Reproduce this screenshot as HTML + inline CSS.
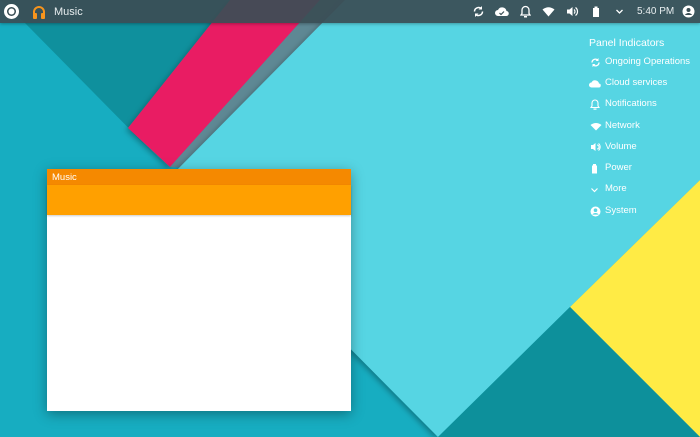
<!DOCTYPE html>
<html><head><meta charset="utf-8"><style>
*{margin:0;padding:0;box-sizing:border-box}
body{width:700px;height:437px;overflow:hidden;position:relative;font-family:"Liberation Sans","DejaVu Sans",sans-serif;background:#17adc1}
svg.bg{position:absolute;left:0;top:0}
.bar{position:absolute;left:0;top:0;width:700px;height:23px;background:rgba(58,78,85,0.93);color:#eef;box-shadow:0 1px 3px rgba(0,0,0,.3)}
.bar .t{position:absolute;top:6px;font-size:11px;color:#e8eef0}
.win{position:absolute;left:47px;top:169px;width:304px;height:242px;background:#fff;box-shadow:0 3px 12px rgba(0,0,0,.35)}
.win .tb{height:16px;background:#f58900;color:#fff;font-size:9.5px;padding:3px 0 0 5px}
.win .hd{height:30px;background:#ffa000;box-shadow:0 1px 2px rgba(0,0,0,.2)}
.panel{position:absolute;left:589px;top:37px;color:#fff;font-size:9.5px}
.panel .h{font-size:10.5px;margin-bottom:6px}
.it{position:absolute;left:16px;white-space:nowrap}
.ic{position:absolute;left:1px}
</style></head><body>
<svg class="bg" width="700" height="437">
<defs><filter id="s" x="-20%" y="-20%" width="140%" height="140%"><feDropShadow dx="-2" dy="2" stdDeviation="3" flood-opacity="0.3"/></filter></defs>
<polygon points="25,23 240,23 128,128 168,168" fill="#0f909d"/>
<polygon points="0,0 240,0 240,23 25,23" fill="#0f909d"/>
<polygon points="230,0 320,0 170,167 128,128" fill="#e91e63" filter="url(#s)"/>
<polygon points="320,0 345,0 185,168 170,167" fill="#5e8894"/>
<polygon points="345,0 700,0 700,180 570,307 438,437 175,172" fill="#57d5e3" filter="url(#s)"/>
<polygon points="700,180 700,437 570,307" fill="#ffeb45"/>
<polygon points="438,437 570,307 700,437" fill="#0d909b"/>
</svg>
<div class="bar">
<svg style="position:absolute;left:3px;top:3px" width="17" height="17"><circle cx="8.5" cy="8.5" r="7.5" fill="#fff"/><circle cx="8.5" cy="8.5" r="4.5" fill="#3a4e55"/><circle cx="8.5" cy="8.5" r="3" fill="#fff"/></svg>
<svg style="position:absolute;left:31px;top:4px" width="16" height="16"><path d="M3 10V8a5 5 0 0 1 10 0v2" fill="none" stroke="#f7941d" stroke-width="2"/><rect x="2" y="9" width="4" height="6" rx="1" fill="#f7941d"/><rect x="10" y="9" width="4" height="6" rx="1" fill="#f7941d"/></svg>
<div class="t" style="left:54px">Music</div>
<svg style="position:absolute;left:472px;top:5px" width="13" height="13"><path d="M2.5 6.5a4 4 0 0 1 7-2.6M10.5 6.5a4 4 0 0 1-7 2.6" fill="none" stroke="#fff" stroke-width="1.5"/><path d="M10 1v3.5H6.5z M3 12V8.5h3.5z" fill="#fff"/></svg>
<svg style="position:absolute;left:495px;top:6px" width="14" height="11"><path d="M3 10a3 3 0 0 1 0-6 4.5 4.5 0 0 1 8.5 1A2.5 2.5 0 0 1 11 10z" fill="#fff"/><path d="M4.5 7l1.5 1.5 3-3" stroke="#3a4e55" stroke-width="1.2" fill="none"/></svg>
<svg style="position:absolute;left:520px;top:5px" width="11" height="13"><path d="M5.5 1.5a3.5 3.5 0 0 0-3.5 3.5v3.5L1 10h9l-1-1.5V5a3.5 3.5 0 0 0-3.5-3.5z" fill="none" stroke="#fff" stroke-width="1.3"/><rect x="4" y="11" width="3" height="1.5" fill="#fff"/></svg>
<svg style="position:absolute;left:542px;top:7px" width="13" height="10"><path d="M0.5 2.5Q6.5-2 12.5 2.5L6.5 9.5z" fill="#fff"/></svg>
<svg style="position:absolute;left:566px;top:6px" width="13" height="11"><path d="M1 3.5h2.5L6.5 1v9L3.5 7.5H1z" fill="#fff"/><path d="M8 3.5a2.5 2.5 0 0 1 0 4M9.5 1.5a5 5 0 0 1 0 8" fill="none" stroke="#fff" stroke-width="1.2"/></svg>
<svg style="position:absolute;left:592px;top:6px" width="8" height="12"><rect x="2.5" y="0.5" width="3" height="2" fill="#fff"/><rect x="1" y="2" width="6" height="9" fill="#fff"/></svg>
<svg style="position:absolute;left:615px;top:8px" width="9" height="7"><path d="M1.5 2l3 3 3-3" stroke="#fff" stroke-width="1.3" fill="none"/></svg>
<div class="t" style="left:637px;font-size:10px;top:6px">5:40 PM</div>
<svg style="position:absolute;left:682px;top:5px" width="13" height="13"><circle cx="6.5" cy="6.5" r="6" fill="#fff"/><circle cx="6.5" cy="5" r="2" fill="#3a4e55"/><path d="M2.8 10a4.5 4.5 0 0 1 7.4 0" fill="#3a4e55"/></svg>
</div>
<div class="win"><div class="tb">Music</div><div class="hd"></div></div>
<div class="panel">
<div class="h">Panel Indicators</div>
<div class="it" style="top:19px">Ongoing Operations</div>
<div class="it" style="top:40px">Cloud services</div>
<div class="it" style="top:61px">Notifications</div>
<div class="it" style="top:83px">Network</div>
<div class="it" style="top:104px">Volume</div>
<div class="it" style="top:125px">Power</div>
<div class="it" style="top:146px">More</div>
<div class="it" style="top:168px">System</div>
<svg class="ic" style="top:20px" width="11" height="11"><path d="M2 5.5a3.5 3.5 0 0 1 6-2.3M9 5.5a3.5 3.5 0 0 1-6 2.3" fill="none" stroke="#fff" stroke-width="1.3"/><path d="M8.5 1v3H5.5z M2.5 10V7h3z" fill="#fff"/></svg>
<svg class="ic" style="top:42px;left:0" width="12" height="9"><path d="M2.5 8.5a2.5 2.5 0 0 1 0-5 4 4 0 0 1 7.5 1A2 2 0 0 1 9.5 8.5z" fill="#fff"/></svg>
<svg class="ic" style="top:62px" width="10" height="11"><path d="M5 1a3 3 0 0 0-3 3v3L1 8.5h8L8 7V4a3 3 0 0 0-3-3z" fill="none" stroke="#fff" stroke-width="1.1"/><rect x="3.5" y="9.5" width="3" height="1.2" fill="#fff"/></svg>
<svg class="ic" style="top:86px" width="12" height="8"><path d="M0.5 2Q6-2 11.5 2L6 7.5z" fill="#fff"/></svg>
<svg class="ic" style="top:105px" width="12" height="10"><path d="M1 3h2L5.5 1v8L3 7H1z" fill="#fff"/><path d="M7 3a2 2 0 0 1 0 4M8.5 1.5a4.5 4.5 0 0 1 0 7" fill="none" stroke="#fff" stroke-width="1"/></svg>
<svg class="ic" style="top:127px;left:2px" width="7" height="10"><rect x="2" y="0" width="3" height="2" fill="#fff"/><rect x="1" y="1.5" width="5" height="8" fill="#fff"/></svg>
<svg class="ic" style="top:150px" width="9" height="6"><path d="M1.5 1.5l3 3 3-3" stroke="#fff" stroke-width="1.2" fill="none"/></svg>
<svg class="ic" style="top:169px" width="11" height="11"><circle cx="5.5" cy="5.5" r="5" fill="#fff"/><circle cx="5.5" cy="4.2" r="1.8" fill="#57d5e3"/><path d="M2.3 8.6a4 4 0 0 1 6.4 0" fill="#57d5e3"/></svg>
</div>
</body></html>
